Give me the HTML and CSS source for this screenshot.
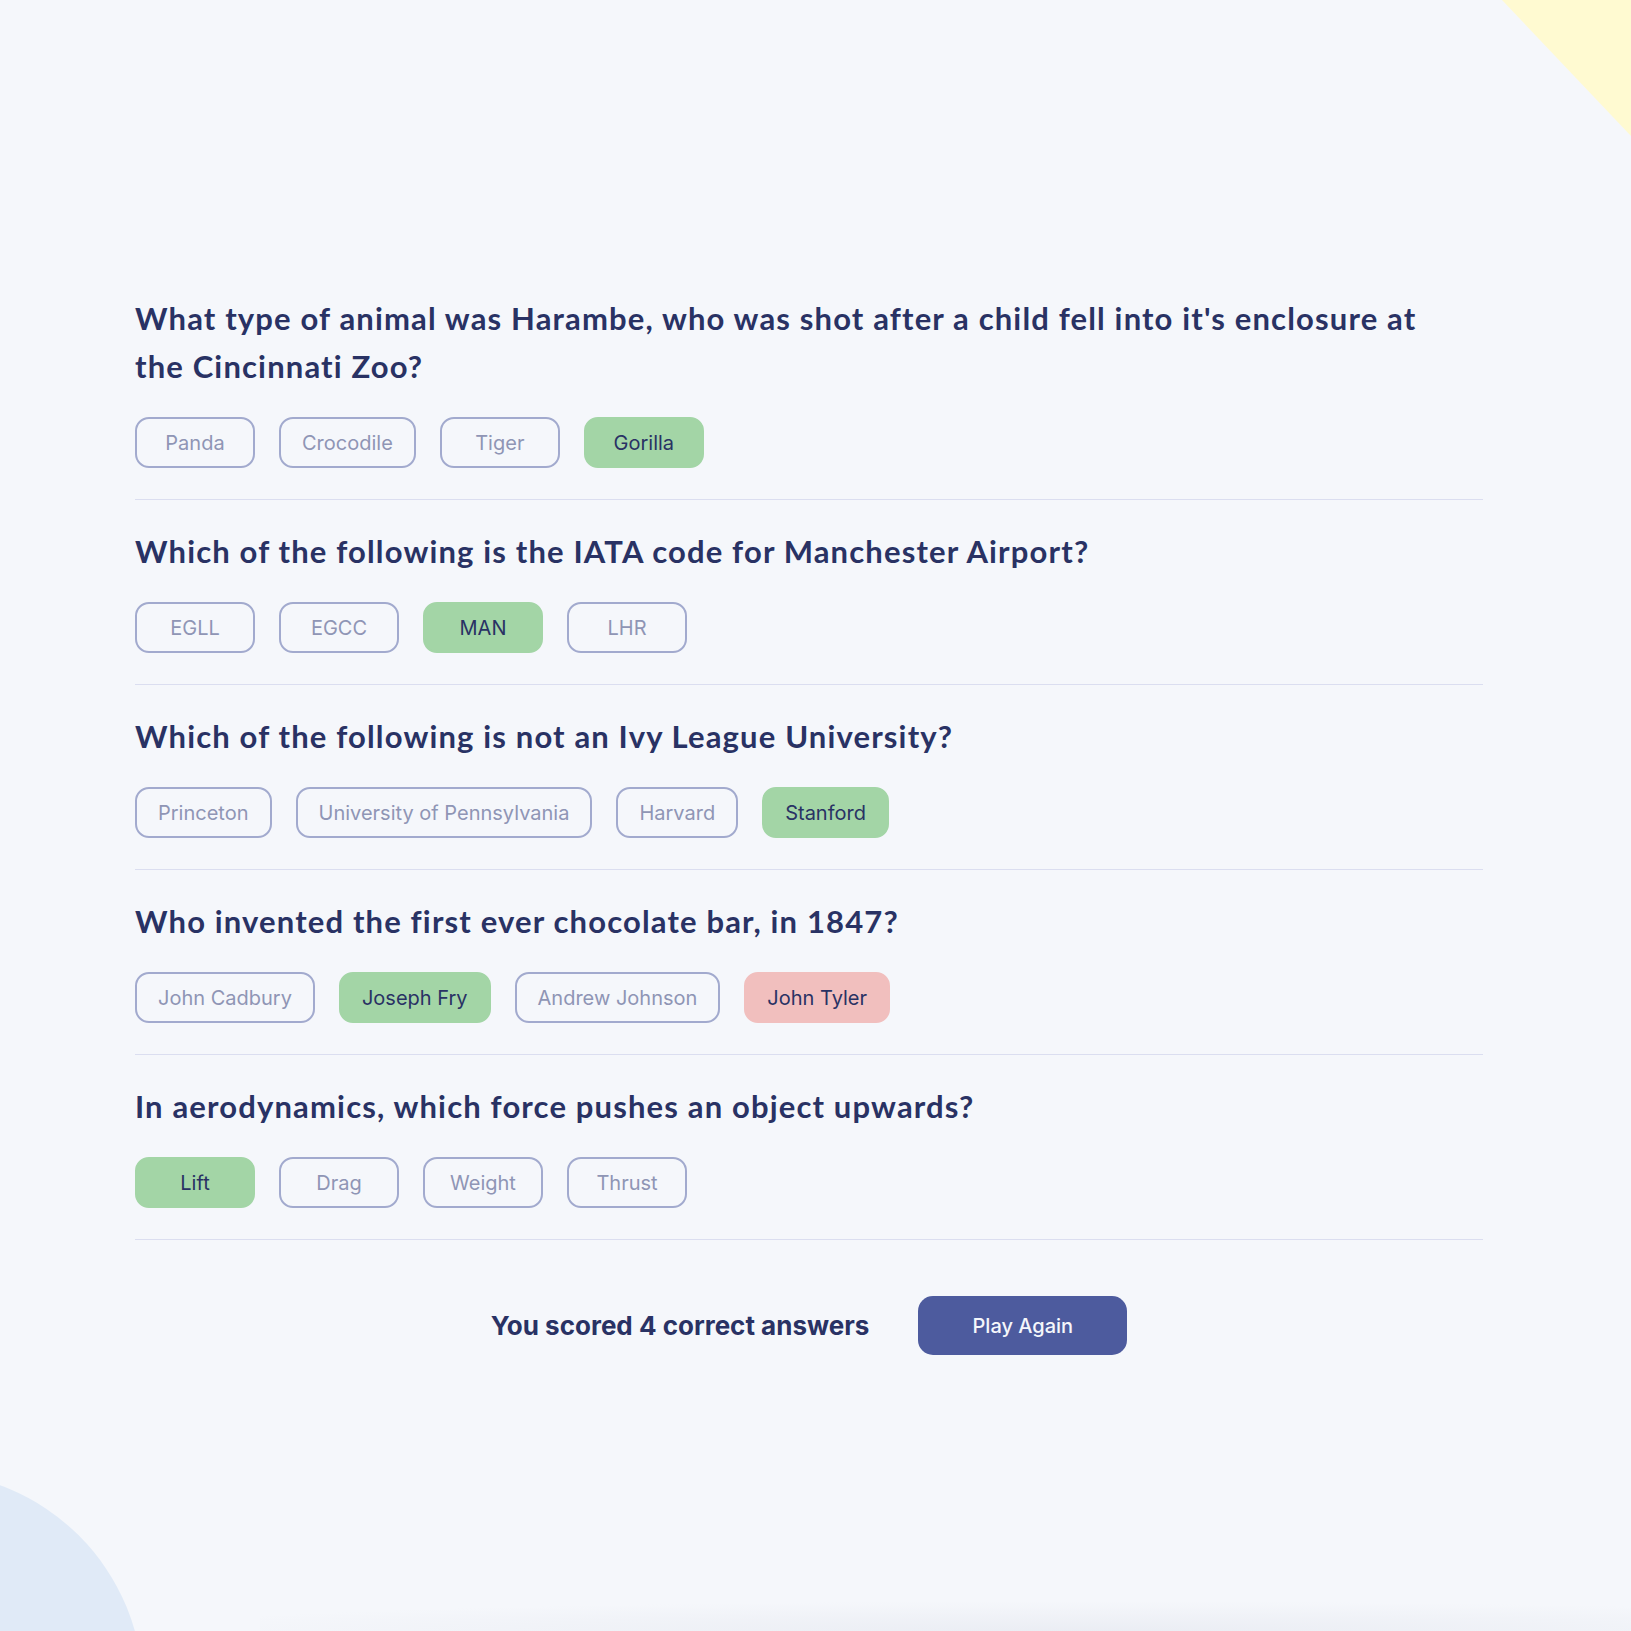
FILE: index.html
```
<!DOCTYPE html>
<html lang="en">
<head>
<meta charset="utf-8">
<title>Quizzical</title>
<link rel="stylesheet" href="styles.css">
</head>
<body>
<div class="page">
<svg class="blob-yellow" width="129" height="136" viewBox="0 0 129 136" aria-hidden="true"><polygon points="0,0 129,0 129,136" fill="#FFFAD1"/></svg>
<div class="blob-blue"></div>
<div class="bottom-shade"></div>
<main class="quiz">
  <section class="q">
    <h2 class="q-title">What type of animal was Harambe, who was shot after a child fell into it's enclosure at the Cincinnati Zoo?</h2>
    <div class="answers">
      <span class="ans">Panda</span>
      <span class="ans">Crocodile</span>
      <span class="ans">Tiger</span>
      <span class="ans correct">Gorilla</span>
    </div>
  </section>
  <section class="q">
    <h2 class="q-title">Which of the following is the IATA code for Manchester Airport?</h2>
    <div class="answers">
      <span class="ans">EGLL</span>
      <span class="ans">EGCC</span>
      <span class="ans correct">MAN</span>
      <span class="ans">LHR</span>
    </div>
  </section>
  <section class="q">
    <h2 class="q-title">Which of the following is not an Ivy League University?</h2>
    <div class="answers">
      <span class="ans">Princeton</span>
      <span class="ans">University of Pennsylvania</span>
      <span class="ans">Harvard</span>
      <span class="ans correct">Stanford</span>
    </div>
  </section>
  <section class="q">
    <h2 class="q-title">Who invented the first ever chocolate bar, in 1847?</h2>
    <div class="answers">
      <span class="ans">John Cadbury</span>
      <span class="ans correct">Joseph Fry</span>
      <span class="ans">Andrew Johnson</span>
      <span class="ans wrong">John Tyler</span>
    </div>
  </section>
  <section class="q">
    <h2 class="q-title">In aerodynamics, which force pushes an object upwards?</h2>
    <div class="answers">
      <span class="ans correct">Lift</span>
      <span class="ans">Drag</span>
      <span class="ans">Weight</span>
      <span class="ans">Thrust</span>
    </div>
  </section>
  <div class="result">
    <p class="score">You scored 4 correct answers</p>
    <button class="play">Play Again</button>
  </div>
</main>
</div>
</body>
</html>
```
FILE: styles.css
```
html, body {
  margin: 0;
  padding: 0;
  background: #F5F7FB;
}
body {
  font-family: "Inter", "Liberation Sans", sans-serif;
  color: #293264;
}
.page {
  position: relative;
  height: 1631px;
  overflow: hidden;
}
.blob-yellow {
  position: absolute;
  top: 0;
  right: 0;
}
.blob-blue {
  position: absolute;
  left: -293px;
  top: 1472px;
  width: 436px;
  height: 436px;
  border-radius: 50%;
  background: #E0EAF7;
}
.bottom-shade {
  position: absolute;
  left: 260px;
  right: 0;
  bottom: 0;
  height: 30px;
  background: radial-gradient(ellipse 70% 100% at 60% 100%, rgba(210,214,226,0.3), rgba(210,214,226,0) 100%);
}
.quiz {
  position: relative;
  padding: 294px 148px 0 135px;
}
.q {
  padding: 27px 0 31px;
  border-bottom: 1px solid #DBDEF0;
}
.q:first-child {
  padding-top: 0;
}
.q-title {
  margin: 0;
  max-width: 1320px;
  font-family: "Lato", "Liberation Sans", sans-serif;
  font-weight: 700;
  font-size: 31px;
  line-height: 48px;
  letter-spacing: 1.15px;
  color: #293264;
}
.answers {
  display: flex;
  gap: 24px;
  margin-top: 27px;
}
.ans {
  box-sizing: border-box;
  min-width: 120px;
  height: 51px;
  padding: 0 21px;
  display: flex;
  align-items: center;
  justify-content: center;
  border: 2px solid #A2AACE;
  border-radius: 14px;
  font-size: 20px;
  color: #8F95B5;
}
.ans.correct {
  background: #A3D5A6;
  border-color: #A3D5A6;
  color: #293264;
}
.ans.wrong {
  background: #F1BFBE;
  border-color: #F1BFBE;
  color: #293264;
}
.result {
  display: flex;
  justify-content: center;
  align-items: center;
  gap: 49px;
  margin-top: 56px;
}
.score {
  margin: 0;
  font-weight: 700;
  font-size: 26px;
  color: #293264;
}
.play {
  width: 209px;
  height: 59px;
  border: none;
  border-radius: 15px;
  background: #4D5B9E;
  color: #F5F7FB;
  font-family: "Inter", "Liberation Sans", sans-serif;
  font-size: 20px;
  font-weight: 500;
}
```
